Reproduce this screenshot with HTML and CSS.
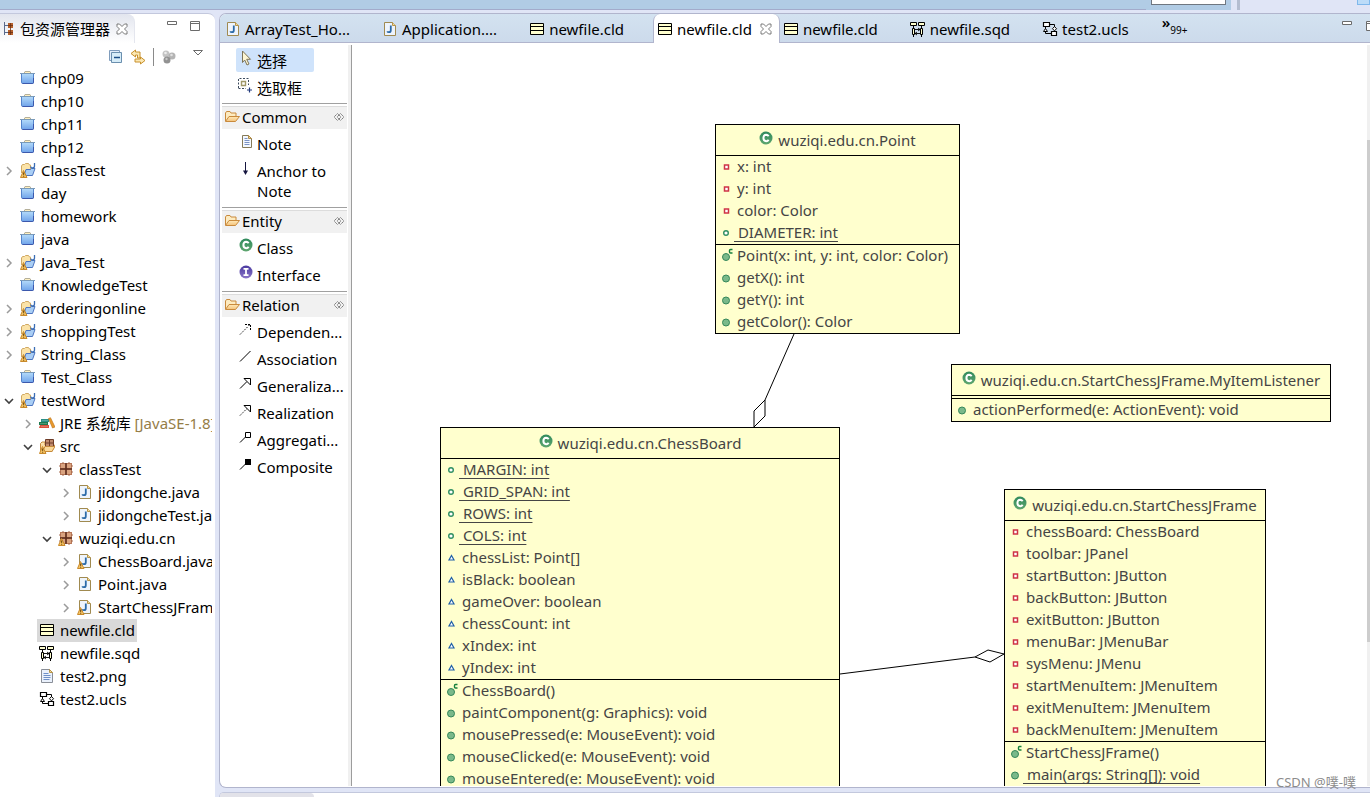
FILE: index.html
```html
<!DOCTYPE html>
<html lang="zh-CN">
<head>
  <meta charset="UTF-8">
  <meta name="viewport" content="width=device-width, initial-scale=1.0">
  <title>newfile.cld</title>
  <link rel="stylesheet" href="styles.css">
</head>
<body>
  <!-- Icon set -->
  <svg class="sprite" aria-hidden="true">
    <defs>
      <linearGradient id="g-folder" x1="0" y1="0" x2="0" y2="1">
        <stop offset="0" stop-color="#b4dbfa"/><stop offset="1" stop-color="#6fa3ea"/>
      </linearGradient>
      <linearGradient id="g-green" x1="0" y1="0" x2="0" y2="1">
        <stop offset="0" stop-color="#2f8a5c"/><stop offset="1" stop-color="#5fa66f"/>
      </linearGradient>
      <linearGradient id="g-purple" x1="0" y1="0" x2="0" y2="1">
        <stop offset="0" stop-color="#4b3aa0"/><stop offset="1" stop-color="#8a76c8"/>
      </linearGradient>
      <linearGradient id="g-open" x1="0" y1="0" x2="0" y2="1">
        <stop offset="0" stop-color="#ffe9b8"/><stop offset="1" stop-color="#f3c27a"/>
      </linearGradient>
    </defs>
    <symbol id="i-warn" viewBox="0 0 16 16">
      <path d="M3.500 8.500 7 15.500H.5z" fill="#f5c463" stroke="#c98a2c" stroke-linejoin="round"/>
      <path d="M3.700 10.500v2.400M3.700 13.700v1" stroke="#5c3a08"/>
    </symbol>
    <symbol id="i-folder" viewBox="0 0 16 16">
      <path d="M4 3.500 5 1.500h5l1 2" fill="#fff0c0" stroke="#b5b09a"/>
      <path d="M1.500 3.500v8.700q0 1.300 1.300 1.300h9.400q1.300 0 1.300-1.300V3.500z" fill="url(#g-folder)" stroke="#5484cc"/>
      <path d="M0 3.500h15" stroke="#7a9ab8"/>
      <path d="M2.500 13.500h10q1 0 1-1V8" stroke="#3c58ac" fill="none"/>
    </symbol>
    <symbol id="i-project" viewBox="0 0 16 16">
      <path d="M1.500 11V4l1-1.500h2l1-1h3l1 1.500h1v5" fill="#fbe3a8" stroke="#d0a862"/>
      <path d="M4 13.500 6 7.500h4.500l1-1H15l-2.500 7z" fill="#a9cef5" stroke="#4c74c0"/>
      <path d="M14.500 1v3q0 2-2 2t-1.500-1.500" fill="none" stroke="#3b6db4" stroke-width="1.300"/>
      <use href="#i-warn"/>
    </symbol>
    <symbol id="i-jre" viewBox="0 0 16 16">
      <path d="M2 4h8v3H2z" fill="#2c8f86"/><path d="M0 7h9v3H0z" fill="#1f7a50"/>
      <path d="M1 10h9v3H0z" fill="#d9503c"/><path d="M9.500 3.500l2-.8L16 12l-2.500 1z" fill="#e99a2c" stroke="#b86c14" stroke-width=".6"/>
      <path d="M3 5.500h6M1 8.500h7M2 11.500h7" stroke="#fff" stroke-opacity=".3" stroke-width=".7"/>
    </symbol>
    <symbol id="i-src" viewBox="0 0 16 16">
      <path d="M1.500 13V5.500L3 4h3v3h9.500L13 13.500H2z" fill="url(#g-open)" stroke="#c68b3c"/>
      <path d="M6.500 1.500h8v7h-8z" fill="#c08a6c" stroke="#6e3c28"/>
      <path d="M10.500 1v8M6 5h9" stroke="#6e3c28"/>
      <path d="M3.500 13.500 6 8.500h10l-3 5z" fill="#fbd999" stroke="#c68b3c"/>
      <use href="#i-warn"/>
    </symbol>
    <symbol id="i-package" viewBox="0 0 16 16">
      <path d="M2 2h12v12H2z" fill="#b9795a"/>
      <path d="M3 3h4v4H3zM9 3h4v4H9zM3 9h4v4H3zM9 9h4v4H9z" fill="#d9a380"/>
      <path d="M8 2v12M2 8h12" stroke="#5c2c1c" stroke-width="1.500"/>
      <path d="M5 1v2M11 1v2M5 13v2M11 13v2M1 5h2M1 11h2M13 5h2M13 11h2" stroke="#a5684a"/>
    </symbol>
    <symbol id="i-packagewarn" viewBox="0 0 16 16">
      <use href="#i-package"/><use href="#i-warn"/>
    </symbol>
    <symbol id="i-java" viewBox="0 0 16 16">
      <path d="M2.500 1.500h8l3 3v10h-11z" fill="#eef4fc" stroke="#a08a50"/>
      <path d="M10.500 1.500v3h3" fill="#f2dc9c" stroke="#b89448"/>
      <path d="M8.800 4.500v4.700q0 2-1.800 2-1.400 0-1.800-.8" fill="none" stroke="#2b6aa8" stroke-width="1.800"/>
    </symbol>
    <symbol id="i-javawarn" viewBox="0 0 16 16">
      <use href="#i-java"/><use href="#i-warn"/>
    </symbol>
    <symbol id="i-cld" viewBox="0 0 16 16">
      <path d="M1.500 2.500h13v11h-13z" fill="#ffffce" stroke="#000"/>
      <path d="M1 5.500h14M1 9.500h14" stroke="#000"/>
    </symbol>
    <symbol id="i-sqd" viewBox="0 0 16 16">
      <path d="M.5 1.500h6v3h-6zM8.500 1.500h6v3h-6z" fill="#ffffce" stroke="#000"/>
      <path d="M3.500 5v11M11.500 5v11" stroke="#000"/>
      <path d="M2.500 7.500h2v6h-2zM10.500 7.500h2v6h-2z" fill="#ffffce" stroke="#000"/>
      <path d="M5 8.500h5M8 7l2 1.500L8 10M10 12.500H5M7 11l-2 1.500L7 14" stroke="#000" stroke-width=".9" fill="none"/>
    </symbol>
    <symbol id="i-ucls" viewBox="0 0 16 16">
      <path d="M1.500 1.500h6v4h-6zM9.500 10.500h5v4h-5z" fill="#fff" stroke="#000" stroke-width="1.200"/>
      <path d="M8 3.500h4.500V6M3.500 6v6.500H9" fill="none" stroke="#000"/>
      <path d="M12.500 5.500l2 2.200-2 2.200-2-2.200zM3.500 7.500l2 3h-4z" fill="#fff" stroke="#000"/>
    </symbol>
    <symbol id="i-text" viewBox="0 0 16 16">
      <path d="M2.500 1.500h8l3 3v10h-11z" fill="#eaf1fc" stroke="#8a8f98"/>
      <path d="M10.500 1.500v3h3z" fill="#f2dc9c" stroke="#b89448"/>
      <path d="M4.500 5.500h5M4.500 7.500h7M4.500 9.500h7M4.500 11.500h6" stroke="#6d8fc8"/>
    </symbol>
    <symbol id="i-explorer" viewBox="0 0 16 16">
      <path d="M4.500 1v13M5 4.500h3M5 11.500h3" stroke="#5a6a8c" fill="none"/>
      <path d="M8 2h5v5H8zM8 9h5v5H8z" fill="#b5602c"/>
      <path d="M10.500 2v12M8 4.500h5M8 11.500h5" stroke="#6b3012" stroke-width=".8"/>
    </symbol>
    <symbol id="i-close" viewBox="0 0 12 12">
      <path d="M1 1h2.500L6 3.500 8.500 1H11v2.500L8.500 6 11 8.500V11H8.500L6 8.500 3.500 11H1V8.500L3.500 6 1 3.500z" fill="#fff" stroke="#6b6b6b" stroke-width=".9"/>
    </symbol>
    <symbol id="i-min" viewBox="0 0 12 12"><path d="M1.500 1.500h9v3h-9z" fill="#fff" stroke="#6b6b6b"/></symbol>
    <symbol id="i-max" viewBox="0 0 12 12"><path d="M1.500 1.500h9v9h-9zM1 3.500h10" fill="#fff" stroke="#6b6b6b"/></symbol>
    <symbol id="i-collapse" viewBox="0 0 16 16">
      <path d="M2.500 1.500h10v10h-10z" fill="#e3eefa" stroke="#7f9cbc"/>
      <path d="M4.500 3.500h10v10h-10z" fill="#d6ecf8" stroke="#6a8fae"/>
      <path d="M7 8.500h6" stroke="#1b4d86" stroke-width="1.400"/>
    </symbol>
    <symbol id="i-link" viewBox="0 0 16 16">
      <path d="M5.500 1 1 4.500 5.500 8V6h2v3h2.500V3h-4.500z" fill="#fbe8b4" stroke="#c8902c"/>
      <path d="M10.500 8 15 11.500 10.500 15v-2H5v-3h5.500z" fill="#fbe8b4" stroke="#c8902c"/>
    </symbol>
    <symbol id="i-focus" viewBox="0 0 16 16">
      <circle cx="5" cy="5" r="3.500" fill="#c4c4c4"/><circle cx="11" cy="7" r="3.500" fill="#b4b4b4"/><circle cx="6" cy="11" r="3.500" fill="#929292"/>
      <circle cx="4.500" cy="4" r="1.300" fill="#eee"/><circle cx="10.500" cy="6" r="1.300" fill="#e0e0e0"/><circle cx="5.500" cy="10" r="1.200" fill="#c6c6c6"/>
    </symbol>
    <symbol id="i-menu" viewBox="0 0 12 8"><path d="M1.500 1.500h9L6 6z" fill="#fff" stroke="#6b6b6b"/></symbol>
    <symbol id="i-right" viewBox="0 0 16 16"><path d="M6 4l4 4-4 4" fill="none" stroke="#9b9b9b" stroke-width="1.500"/></symbol>
    <symbol id="i-down" viewBox="0 0 16 16"><path d="M4 6l4 4 4-4" fill="none" stroke="#404040" stroke-width="1.600"/></symbol>
    <symbol id="i-arrow" viewBox="0 0 16 16">
      <path d="M6.500 1v11.500L8.700 10l2.300 5 2-1-2.300-4.700h3.800z" fill="#fdf6d4" stroke="#7d7458"/>
    </symbol>
    <symbol id="i-marquee" viewBox="0 0 16 16">
      <path d="M2.500 11V1.500h10V8M2.500 11.500H10" fill="none" stroke="#3c4a5c" stroke-dasharray="2 1.500"/>
      <path d="M5.500 4.500h4v4h-4z" fill="#fff" stroke="#a09868" stroke-width="1.400"/>
      <path d="M13.500 10.500v5M11 13h5" stroke="#223a7c" stroke-width="1.200"/>
    </symbol>
    <symbol id="i-open" viewBox="0 0 16 16">
      <path d="M1.500 12V4l1-1.500h3.500l1 1.500h5V7" fill="#fdebc0" stroke="#c98a3c"/>
      <path d="M1.500 12.500 5 7.500h10.500l-4 5z" fill="url(#g-open)" stroke="#c98a3c"/>
    </symbol>
    <symbol id="i-pin" viewBox="0 0 12 10">
      <path d="M4.500 1.500 1 5l3.500 3.500L8 5zM7.500 1.500 4 5l3.500 3.500L11 5z" fill="none" stroke="#7c7c7c" stroke-dasharray="1.500 .5"/>
    </symbol>
    <symbol id="i-note" viewBox="0 0 16 16">
      <path d="M4.500 1.500h6l3 3v9h-9z" fill="#f4f8fe" stroke="#857a58"/>
      <path d="M10.500 1.500v3h3z" fill="#f2dc9c" stroke="#b08c48"/>
      <path d="M6.500 4.500h3M6.500 6.500h5M6.500 8.500h5M6.500 10.500h5" stroke="#7b93c4"/>
    </symbol>
    <symbol id="i-anchor" viewBox="0 0 16 16">
      <path d="M7.500 1v11" stroke="#15153f"/><path d="M5 9.500h5L7.500 14z" fill="#15153f"/>
    </symbol>
    <symbol id="i-class" viewBox="0 0 14 14">
      <circle cx="7" cy="7" r="6.500" fill="url(#g-green)"/>
      <path d="M9.600 5.200Q8.800 3.800 7.200 3.800 4.400 4 4.400 7t2.800 3.200q1.600 0 2.400-1.400" fill="none" stroke="#fff" stroke-width="2"/>
    </symbol>
    <symbol id="i-interface" viewBox="0 0 14 14">
      <circle cx="7" cy="7" r="6.500" fill="url(#g-purple)"/>
      <path d="M4.500 3.800h5M4.500 10.200h5M7 3.500v7" stroke="#fff" stroke-width="1.800"/>
    </symbol>
    <symbol id="i-dependency" viewBox="0 0 16 16">
      <path d="M2 12.500 12 2.500" stroke="#000" stroke-dasharray="1.500 1.500"/><path d="M7 2.500h5.500v5.500" stroke="#000" fill="none" stroke-dasharray="2 1"/>
    </symbol>
    <symbol id="i-association" viewBox="0 0 16 16"><path d="M2 12.500 12.500 2" stroke="#000"/></symbol>
    <symbol id="i-generalization" viewBox="0 0 16 16">
      <path d="M2 12.500 9 5.500" stroke="#000"/><path d="M6 2.500h6.500V9z" fill="#fff" stroke="#000"/>
    </symbol>
    <symbol id="i-realization" viewBox="0 0 16 16">
      <path d="M2 12.500 9 5.500" stroke="#000" stroke-dasharray="1.500 1.500"/><path d="M6 2.500h6.500V9z" fill="#fff" stroke="#000"/>
    </symbol>
    <symbol id="i-aggregation" viewBox="0 0 16 16">
      <path d="M2 12.500 8 6.500" stroke="#000"/><path d="M7.500 2.500h5v5h-5z" fill="#fff" stroke="#000"/>
    </symbol>
    <symbol id="i-composite" viewBox="0 0 16 16">
      <path d="M2 12.500 8 6.500" stroke="#000"/><path d="M7 2h6v6H7z"/>
    </symbol>
    <symbol id="i-private" viewBox="0 0 16 16">
      <path d="M6.500 6h4v4h-4z" fill="#fff" stroke="#cf3346" stroke-width="1.500"/>
    </symbol>
    <symbol id="i-field" viewBox="0 0 16 16">
      <circle cx="8" cy="8" r="2.300" fill="#fff" stroke="#2f8f62" stroke-width="1.400"/>
    </symbol>
    <symbol id="i-default" viewBox="0 0 16 16">
      <path d="M8.500 5.500 11 10H6z" fill="#fff" stroke="#2060a8" stroke-width="1.200"/>
    </symbol>
    <symbol id="i-method" viewBox="0 0 16 16">
      <circle cx="8" cy="8.500" r="3.500" fill="#7ab98a" stroke="#35875a"/>
    </symbol>
    <symbol id="i-ctor" viewBox="0 0 16 16">
      <circle cx="8" cy="9" r="3.500" fill="#7ab98a" stroke="#35875a"/>
      <path d="M14.500 1.500h-2q-1 0-1 1v1.500q0 1 1 1h2" fill="none" stroke="#16803c" stroke-width="1.400"/>
    </symbol>
  </svg>

  <header class="topbar">
    <div class="topbar-main"></div>
    <div class="topbar-search"><input type="text" class="quick-access" aria-label="Quick Access"></div>
    <div class="topbar-perspective">
      <span class="grip"></span>
      <button class="perspective active" aria-label="Java"></button>
    </div>
  </header>

  <div class="workbench">
    <!-- Package explorer -->
    <aside class="explorer">
      <div class="view-head">
        <div class="view-tab">
          <svg class="icon"><use href="#i-explorer"/></svg>
          <span>包资源管理器</span>
          <button class="icon-btn" aria-label="Close view"><svg class="icon-sm"><use href="#i-close"/></svg></button>
        </div>
        <div class="view-controls">
          <button class="icon-btn" aria-label="Minimize"><svg class="icon-sm"><use href="#i-min"/></svg></button>
          <button class="icon-btn" aria-label="Maximize"><svg class="icon-sm"><use href="#i-max"/></svg></button>
        </div>
      </div>
      <div class="view-toolbar">
        <button class="icon-btn" aria-label="Collapse all"><svg class="icon"><use href="#i-collapse"/></svg></button>
        <button class="icon-btn" aria-label="Link with editor"><svg class="icon"><use href="#i-link"/></svg></button>
        <span class="divider"></span>
        <button class="icon-btn" aria-label="Focus"><svg class="icon"><use href="#i-focus"/></svg></button>
        <button class="icon-btn view-menu" aria-label="View menu"><svg class="icon-menu"><use href="#i-menu"/></svg></button>
      </div>

      <ul class="tree">
        <li><div class="row"><span class="twist"></span><span class="node"><svg class="icon"><use href="#i-folder"/></svg>chp09</span></div></li>
        <li><div class="row"><span class="twist"></span><span class="node"><svg class="icon"><use href="#i-folder"/></svg>chp10</span></div></li>
        <li><div class="row"><span class="twist"></span><span class="node"><svg class="icon"><use href="#i-folder"/></svg>chp11</span></div></li>
        <li><div class="row"><span class="twist"></span><span class="node"><svg class="icon"><use href="#i-folder"/></svg>chp12</span></div></li>
        <li><div class="row"><button class="twist" aria-label="Expand"><svg class="icon"><use href="#i-right"/></svg></button><span class="node"><svg class="icon"><use href="#i-project"/></svg>ClassTest</span></div></li>
        <li><div class="row"><span class="twist"></span><span class="node"><svg class="icon"><use href="#i-folder"/></svg>day</span></div></li>
        <li><div class="row"><span class="twist"></span><span class="node"><svg class="icon"><use href="#i-folder"/></svg>homework</span></div></li>
        <li><div class="row"><span class="twist"></span><span class="node"><svg class="icon"><use href="#i-folder"/></svg>java</span></div></li>
        <li><div class="row"><button class="twist" aria-label="Expand"><svg class="icon"><use href="#i-right"/></svg></button><span class="node"><svg class="icon"><use href="#i-project"/></svg>Java_Test</span></div></li>
        <li><div class="row"><span class="twist"></span><span class="node"><svg class="icon"><use href="#i-folder"/></svg>KnowledgeTest</span></div></li>
        <li><div class="row"><button class="twist" aria-label="Expand"><svg class="icon"><use href="#i-right"/></svg></button><span class="node"><svg class="icon"><use href="#i-project"/></svg>orderingonline</span></div></li>
        <li><div class="row"><button class="twist" aria-label="Expand"><svg class="icon"><use href="#i-right"/></svg></button><span class="node"><svg class="icon"><use href="#i-project"/></svg>shoppingTest</span></div></li>
        <li><div class="row"><button class="twist" aria-label="Expand"><svg class="icon"><use href="#i-right"/></svg></button><span class="node"><svg class="icon"><use href="#i-project"/></svg>String_Class</span></div></li>
        <li><div class="row"><span class="twist"></span><span class="node"><svg class="icon"><use href="#i-folder"/></svg>Test_Class</span></div></li>
        <li>
          <div class="row"><button class="twist" aria-label="Collapse"><svg class="icon"><use href="#i-down"/></svg></button><span class="node"><svg class="icon"><use href="#i-project"/></svg>testWord</span></div>
          <ul>
            <li><div class="row"><button class="twist" aria-label="Expand"><svg class="icon"><use href="#i-right"/></svg></button><span class="node"><svg class="icon"><use href="#i-jre"/></svg><span>JRE 系统库 <span class="decor">[JavaSE-1.8]</span></span></span></div></li>
            <li>
              <div class="row"><button class="twist" aria-label="Collapse"><svg class="icon"><use href="#i-down"/></svg></button><span class="node"><svg class="icon"><use href="#i-src"/></svg>src</span></div>
              <ul>
                <li>
                  <div class="row"><button class="twist" aria-label="Collapse"><svg class="icon"><use href="#i-down"/></svg></button><span class="node"><svg class="icon"><use href="#i-package"/></svg>classTest</span></div>
                  <ul>
                    <li><div class="row"><button class="twist" aria-label="Expand"><svg class="icon"><use href="#i-right"/></svg></button><span class="node"><svg class="icon"><use href="#i-java"/></svg>jidongche.java</span></div></li>
                    <li><div class="row"><button class="twist" aria-label="Expand"><svg class="icon"><use href="#i-right"/></svg></button><span class="node"><svg class="icon"><use href="#i-java"/></svg>jidongcheTest.java</span></div></li>
                  </ul>
                </li>
                <li>
                  <div class="row"><button class="twist" aria-label="Collapse"><svg class="icon"><use href="#i-down"/></svg></button><span class="node"><svg class="icon"><use href="#i-packagewarn"/></svg>wuziqi.edu.cn</span></div>
                  <ul>
                    <li><div class="row"><button class="twist" aria-label="Expand"><svg class="icon"><use href="#i-right"/></svg></button><span class="node"><svg class="icon"><use href="#i-javawarn"/></svg>ChessBoard.java</span></div></li>
                    <li><div class="row"><button class="twist" aria-label="Expand"><svg class="icon"><use href="#i-right"/></svg></button><span class="node"><svg class="icon"><use href="#i-java"/></svg>Point.java</span></div></li>
                    <li><div class="row"><button class="twist" aria-label="Expand"><svg class="icon"><use href="#i-right"/></svg></button><span class="node"><svg class="icon"><use href="#i-javawarn"/></svg>StartChessJFrame.java</span></div></li>
                  </ul>
                </li>
              </ul>
            </li>
            <li><div class="row"><span class="twist"></span><span class="node selected"><svg class="icon"><use href="#i-cld"/></svg>newfile.cld</span></div></li>
            <li><div class="row"><span class="twist"></span><span class="node"><svg class="icon"><use href="#i-sqd"/></svg>newfile.sqd</span></div></li>
            <li><div class="row"><span class="twist"></span><span class="node"><svg class="icon"><use href="#i-text"/></svg>test2.png</span></div></li>
            <li><div class="row"><span class="twist"></span><span class="node"><svg class="icon"><use href="#i-ucls"/></svg>test2.ucls</span></div></li>
          </ul>
        </li>
      </ul>
    </aside>

    <main class="main-area">
      <section class="editor">
        <nav class="tabs">
          <button class="tab"><svg class="icon"><use href="#i-java"/></svg>ArrayTest_Ho...</button>
          <button class="tab"><svg class="icon"><use href="#i-java"/></svg>Application....</button>
          <button class="tab"><svg class="icon"><use href="#i-cld"/></svg>newfile.cld</button>
          <button class="tab active"><svg class="icon"><use href="#i-cld"/></svg>newfile.cld<svg class="icon-sm tab-close"><use href="#i-close"/></svg></button>
          <button class="tab"><svg class="icon"><use href="#i-cld"/></svg>newfile.cld</button>
          <button class="tab"><svg class="icon"><use href="#i-sqd"/></svg>newfile.sqd</button>
          <button class="tab"><svg class="icon"><use href="#i-ucls"/></svg>test2.ucls</button>
          <button class="more-tabs"><span class="chevron">»</span><span class="count">99+</span></button>
          <div class="editor-controls">
            <button class="icon-btn" aria-label="Minimize editor"><svg class="icon-sm"><use href="#i-min"/></svg></button>
            <button class="icon-btn" aria-label="Maximize editor"><svg class="icon-sm"><use href="#i-max"/></svg></button>
          </div>
        </nav>

        <div class="editor-body">
          <!-- Tool palette -->
          <div class="palette">
            <div class="tools">
              <button class="tool active"><svg class="icon"><use href="#i-arrow"/></svg>选择</button>
              <button class="tool"><svg class="icon"><use href="#i-marquee"/></svg>选取框</button>
            </div>
            <div class="drawer">
              <button class="drawer-head"><svg class="icon"><use href="#i-open"/></svg>Common<svg class="pin"><use href="#i-pin"/></svg></button>
              <button class="entry"><svg class="icon"><use href="#i-note"/></svg><span>Note</span></button>
              <button class="entry"><svg class="icon"><use href="#i-anchor"/></svg><span>Anchor to Note</span></button>
            </div>
            <div class="drawer">
              <button class="drawer-head"><svg class="icon"><use href="#i-open"/></svg>Entity<svg class="pin"><use href="#i-pin"/></svg></button>
              <button class="entry"><svg class="icon round"><use href="#i-class"/></svg><span>Class</span></button>
              <button class="entry"><svg class="icon round"><use href="#i-interface"/></svg><span>Interface</span></button>
            </div>
            <div class="drawer">
              <button class="drawer-head"><svg class="icon"><use href="#i-open"/></svg>Relation<svg class="pin"><use href="#i-pin"/></svg></button>
              <button class="entry"><svg class="icon"><use href="#i-dependency"/></svg><span>Dependen...</span></button>
              <button class="entry"><svg class="icon"><use href="#i-association"/></svg><span>Association</span></button>
              <button class="entry"><svg class="icon"><use href="#i-generalization"/></svg><span>Generaliza...</span></button>
              <button class="entry"><svg class="icon"><use href="#i-realization"/></svg><span>Realization</span></button>
              <button class="entry"><svg class="icon"><use href="#i-aggregation"/></svg><span>Aggregati...</span></button>
              <button class="entry"><svg class="icon"><use href="#i-composite"/></svg><span>Composite</span></button>
            </div>
          </div>

          <!-- Class diagram -->
          <div class="canvas">
            <svg class="links" aria-hidden="true">
              <path d="M442 289 413 355M413 355v16l-11 11v-16z"/>
              <path d="M488 629 623 612M623 612l13-7 16 4-14 8z"/>
            </svg>

            <div class="uml uml-point">
              <h2><svg class="badge"><use href="#i-class"/></svg>wuziqi.edu.cn.Point</h2>
              <ul>
                <li><svg class="icon"><use href="#i-private"/></svg><span>x: int</span></li>
                <li><svg class="icon"><use href="#i-private"/></svg><span>y: int</span></li>
                <li><svg class="icon"><use href="#i-private"/></svg><span>color: Color</span></li>
                <li class="static"><svg class="icon"><use href="#i-field"/></svg><span>&nbsp;DIAMETER: int</span></li>
              </ul>
              <ul>
                <li><svg class="icon"><use href="#i-ctor"/></svg><span>Point(x: int, y: int, color: Color)</span></li>
                <li><svg class="icon"><use href="#i-method"/></svg><span>getX(): int</span></li>
                <li><svg class="icon"><use href="#i-method"/></svg><span>getY(): int</span></li>
                <li><svg class="icon"><use href="#i-method"/></svg><span>getColor(): Color</span></li>
              </ul>
            </div>

            <div class="uml uml-board">
              <h2><svg class="badge"><use href="#i-class"/></svg>wuziqi.edu.cn.ChessBoard</h2>
              <ul>
                <li class="static"><svg class="icon"><use href="#i-field"/></svg><span>&nbsp;MARGIN: int</span></li>
                <li class="static"><svg class="icon"><use href="#i-field"/></svg><span>&nbsp;GRID_SPAN: int</span></li>
                <li class="static"><svg class="icon"><use href="#i-field"/></svg><span>&nbsp;ROWS: int</span></li>
                <li class="static"><svg class="icon"><use href="#i-field"/></svg><span>&nbsp;COLS: int</span></li>
                <li><svg class="icon"><use href="#i-default"/></svg><span>chessList: Point[]</span></li>
                <li><svg class="icon"><use href="#i-default"/></svg><span>isBlack: boolean</span></li>
                <li><svg class="icon"><use href="#i-default"/></svg><span>gameOver: boolean</span></li>
                <li><svg class="icon"><use href="#i-default"/></svg><span>chessCount: int</span></li>
                <li><svg class="icon"><use href="#i-default"/></svg><span>xIndex: int</span></li>
                <li><svg class="icon"><use href="#i-default"/></svg><span>yIndex: int</span></li>
              </ul>
              <ul>
                <li><svg class="icon"><use href="#i-ctor"/></svg><span>ChessBoard()</span></li>
                <li><svg class="icon"><use href="#i-method"/></svg><span>paintComponent(g: Graphics): void</span></li>
                <li><svg class="icon"><use href="#i-method"/></svg><span>mousePressed(e: MouseEvent): void</span></li>
                <li><svg class="icon"><use href="#i-method"/></svg><span>mouseClicked(e: MouseEvent): void</span></li>
                <li><svg class="icon"><use href="#i-method"/></svg><span>mouseEntered(e: MouseEvent): void</span></li>
              </ul>
            </div>

            <div class="uml uml-listener">
              <h2><svg class="badge"><use href="#i-class"/></svg>wuziqi.edu.cn.StartChessJFrame.MyItemListener</h2>
              <ul class="empty"></ul>
              <ul>
                <li><svg class="icon"><use href="#i-method"/></svg><span>actionPerformed(e: ActionEvent): void</span></li>
              </ul>
            </div>

            <div class="uml uml-frame">
              <h2><svg class="badge"><use href="#i-class"/></svg>wuziqi.edu.cn.StartChessJFrame</h2>
              <ul>
                <li><svg class="icon"><use href="#i-private"/></svg><span>chessBoard: ChessBoard</span></li>
                <li><svg class="icon"><use href="#i-private"/></svg><span>toolbar: JPanel</span></li>
                <li><svg class="icon"><use href="#i-private"/></svg><span>startButton: JButton</span></li>
                <li><svg class="icon"><use href="#i-private"/></svg><span>backButton: JButton</span></li>
                <li><svg class="icon"><use href="#i-private"/></svg><span>exitButton: JButton</span></li>
                <li><svg class="icon"><use href="#i-private"/></svg><span>menuBar: JMenuBar</span></li>
                <li><svg class="icon"><use href="#i-private"/></svg><span>sysMenu: JMenu</span></li>
                <li><svg class="icon"><use href="#i-private"/></svg><span>startMenuItem: JMenuItem</span></li>
                <li><svg class="icon"><use href="#i-private"/></svg><span>exitMenuItem: JMenuItem</span></li>
                <li><svg class="icon"><use href="#i-private"/></svg><span>backMenuItem: JMenuItem</span></li>
              </ul>
              <ul>
                <li><svg class="icon"><use href="#i-ctor"/></svg><span>StartChessJFrame()</span></li>
                <li class="static"><svg class="icon"><use href="#i-method"/></svg><span>&nbsp;main(args: String[]): void</span></li>
              </ul>
            </div>
          </div>

          <div class="scrollbar"><div class="thumb"></div></div>
        </div>
      </section>

      <section class="bottom-view"><div class="bottom-tab"></div></section>
    </main>
  </div>

  <div class="watermark">CSDN @噗-噗</div>
</body>
</html>
```
FILE: styles.css
```css
:root {
  --frame: #e0e5f6;
  --bar: #b1cce5;
  --edge: #b1b5cd;
  --uml-bg: #ffffce;
  --uml-text: #454545;
}

* {
  box-sizing: border-box;
}

body {
  margin: 0;
  height: 100vh;
  display: flex;
  flex-direction: column;
  overflow: hidden;
  background: var(--frame);
  color: #000;
  font-family: "Noto Sans", "Noto Sans CJK SC", sans-serif;
  font-size: 15px;
}

ul {
  list-style: none;
  margin: 0;
  padding: 0;
}

button {
  font: inherit;
  color: inherit;
  background: none;
  border: none;
  padding: 0;
  text-align: left;
}

svg {
  flex: none;
}

.sprite {
  position: absolute;
  width: 0;
  height: 0;
}

.icon {
  width: 16px;
  height: 16px;
}

.icon-sm {
  width: 12px;
  height: 12px;
}

.icon-menu {
  width: 12px;
  height: 8px;
}

.icon-btn {
  display: flex;
}

/* Top bar */
.topbar {
  flex: none;
  display: flex;
  height: 10px;
  overflow: hidden;
}

.topbar-main {
  flex: 1;
  background: var(--bar);
  border-bottom: 1px solid #a3abcb;
}

.topbar-search {
  display: flex;
  align-items: flex-start;
  width: 85px;
  padding: 0 5px;
  background: var(--bar);
}

.quick-access {
  width: 100%;
  height: 5px;
  padding: 0;
  background: #fff;
  border: 1px solid #6f7780;
  border-top: none;
}

.topbar-perspective {
  display: flex;
  justify-content: space-between;
  width: 139px;
  padding-left: 6px;
}

.grip {
  width: 3px;
  background: #b4bdd0;
}

.perspective.active {
  width: 13px;
  height: 5px;
  background: #bcdcf8;
  border: 1px solid #7fb8ec;
  border-top: none;
}

/* Layout */
.workbench {
  flex: 1;
  min-height: 0;
  display: grid;
  grid-template-columns: 215px minmax(0, 1fr);
  gap: 4px;
  padding-top: 3px;
}

/* Package explorer */
.explorer {
  background: #fff;
  border-top: 1px solid #c3c8dd;
  border-top-right-radius: 7px;
  overflow: hidden;
  padding-right: 3px;
}

.view-head {
  display: flex;
  justify-content: space-between;
  height: 29px;
}

.view-tab {
  display: flex;
  align-items: center;
  gap: 4px;
  padding-right: 6px;
  border-top-right-radius: 8px;
  border-right: 1px solid #e4e6ee;
  background: linear-gradient(#e2e5ee, #fff);
}

.view-tab .icon-btn {
  margin-left: 2px;
}

.view-controls {
  display: flex;
  gap: 11px;
  padding: 6px 11px;
}

.view-toolbar {
  display: flex;
  align-items: center;
  justify-content: flex-end;
  gap: 7px;
  height: 24px;
  padding: 3px 8px 0 0;
}

.divider {
  width: 1px;
  height: 18px;
  background: #8a8a8a;
}

.view-menu {
  padding-bottom: 8px;
  margin-left: 8px;
}

.tree {
  overflow: hidden;
}

.tree ul {
  padding-left: 19px;
}

.row {
  display: flex;
  align-items: center;
  height: 23px;
  padding-left: 1px;
  white-space: nowrap;
}

.twist {
  flex: none;
  display: flex;
  width: 17px;
}

.node {
  display: flex;
  align-items: center;
  gap: 5px;
  height: 23px;
  padding: 0 2px 2px;
}

.node.selected {
  background: #d9d9d9;
}

.decor {
  color: #957d47;
}

/* Editor */
.main-area {
  display: flex;
  flex-direction: column;
  gap: 4px;
  min-height: 0;
}

.editor {
  flex: 1;
  min-height: 0;
  display: flex;
  flex-direction: column;
  background: #fff;
  border: 1px solid var(--edge);
  border-right: none;
  border-radius: 7px 0 0 7px;
  overflow: hidden;
}

.tabs {
  flex: none;
  display: flex;
  height: 29px;
  padding-left: 2px;
  background: linear-gradient(#d3e2f0, #ccdaeb);
  box-shadow: inset 0 -1px var(--edge);
}

.tab {
  display: flex;
  align-items: center;
  gap: 4px;
  padding: 0 29px 0 3px;
  white-space: nowrap;
}

.tab.active {
  padding-right: 7px;
  background: #fff;
  border: 1px solid var(--edge);
  border-width: 0 1px;
  border-radius: 7px 7px 0 0;
}

.tab-close {
  margin-left: 4px;
}

.more-tabs {
  display: flex;
  align-items: flex-start;
  padding-left: 4px;
}

.chevron {
  font-size: 15px;
  font-weight: 600;
  line-height: 16px;
}

.count {
  font-size: 10px;
  line-height: 32px;
}

.editor-controls {
  display: flex;
  gap: 12px;
  margin-left: auto;
  margin-right: -7px;
  padding-top: 6px;
}

.editor-body {
  flex: 1;
  min-height: 0;
  display: flex;
  padding: 2px 0 1px;
}

/* Palette */
.palette {
  flex: none;
  width: 132px;
  padding: 3px 4px 0 2px;
  border-right: 1px solid #9c9c9c;
  box-shadow: inset -3px 0 #f0f0f0;
}

.tools {
  display: flex;
  flex-direction: column;
  gap: 3px;
  padding: 0 0 4px 14px;
}

.tool {
  display: flex;
  align-items: center;
  gap: 5px;
  height: 24px;
  border-radius: 2px;
}

.tool.active {
  width: 78px;
  background: #cfe3fb;
}

.tool .icon {
  margin-bottom: 4px;
}

.drawer {
  border-top: 1px solid #a0a0a0;
  padding: 2px 0;
}

.drawer-head {
  display: flex;
  align-items: center;
  gap: 2px;
  width: 100%;
  height: 23px;
  margin-bottom: 2px;
  padding: 0 2px 2px;
  background: #f1f1f1;
  border-top: 1px solid #dcdcdc;
}

.pin {
  width: 12px;
  height: 10px;
  margin-left: auto;
}

.entry {
  display: flex;
  align-items: flex-start;
  gap: 3px;
  width: 100%;
  padding: 3px 0 4px 16px;
  line-height: 20px;
}

.icon.round {
  height: 14px;
}

/* Class diagram */
.canvas {
  flex: 1;
  position: relative;
  overflow: hidden;
}

.links {
  position: absolute;
  top: 0;
  left: 0;
  width: 100%;
  height: 100%;
  fill: none;
  stroke: #000;
}

.uml {
  position: absolute;
  background: var(--uml-bg);
  border: 1px solid #000;
  color: var(--uml-text);
  white-space: nowrap;
}

.uml-point {
  left: 363px;
  top: 79px;
  width: 245px;
}

.uml-board {
  left: 88px;
  top: 382px;
  width: 400px;
}

.uml-listener {
  left: 599px;
  top: 319px;
  width: 380px;
}

.uml-frame {
  left: 652px;
  top: 444px;
  width: 262px;
}

.uml h2 {
  display: flex;
  align-items: center;
  justify-content: center;
  gap: 5px;
  height: 30px;
  margin: 0;
  font-size: 15px;
  font-weight: 400;
}

.badge {
  width: 14px;
  height: 14px;
  margin-bottom: 4px;
}

.uml ul {
  border-top: 1px solid #000;
}

.uml .empty {
  height: 3px;
}

.uml li {
  display: flex;
  align-items: center;
  height: 22px;
  padding-left: 2px;
}

.uml li span {
  padding: 0 0 2px 3px;
}

.uml .static span {
  padding-left: 0;
  text-decoration: underline 1px;
  text-decoration-skip-ink: none;
  text-underline-offset: 3px;
}

.scrollbar {
  flex: none;
  width: 3px;
  padding-top: 95px;
  background: #f0f0f0;
}

.thumb {
  height: 78%;
  max-height: 502px;
  background: #cdcdcd;
}

/* Bottom view */
.bottom-view {
  flex: none;
  height: 5px;
  background: #fff;
  border-top: 1px solid #c3c8dd;
  border-left: 1px solid #c3c8dd;
  border-top-left-radius: 7px;
}

.bottom-tab {
  width: 94px;
  height: 4px;
  background: #e2e2e9;
  border-radius: 4px 6px 0 0;
}

.watermark {
  position: absolute;
  right: 14px;
  bottom: 6px;
  font-size: 13px;
  line-height: 18px;
  color: #8c8c8c;
}
```
